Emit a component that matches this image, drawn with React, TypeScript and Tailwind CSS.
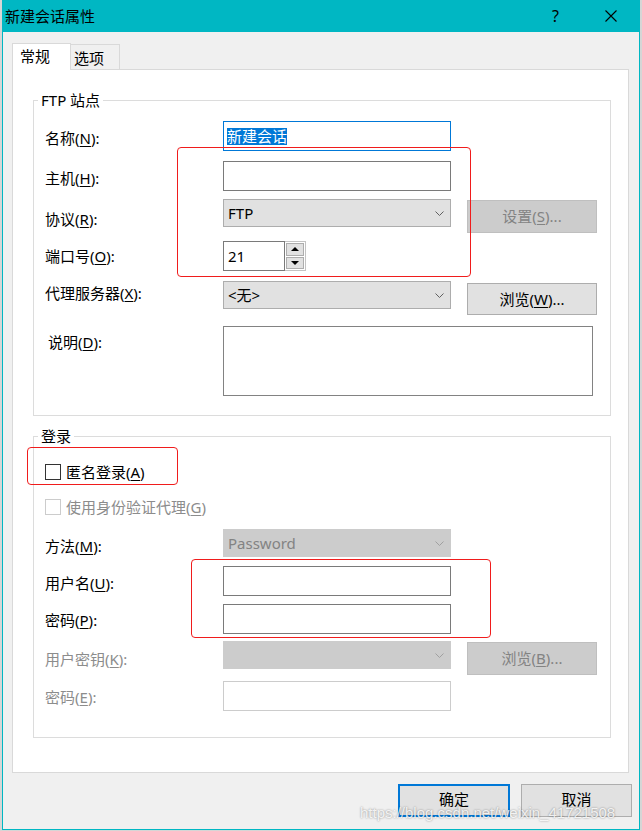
import type { ReactNode } from 'react';

const dimText = 'text-[#8c8c8c]';

function Key({ k }: { k: string }) {
  return <span className="underline underline-offset-2">{k}</span>;
}

function Label({ text, k, tail = ':', dim = false, pt }: { text: string; k: string; tail?: string; dim?: boolean; pt: string }) {
  return (
    <div className={`w-[178px] shrink-0 leading-[20px] ${pt} ${dim ? dimText : 'text-black'}`}>
      {text}(<Key k={k} />){tail}
    </div>
  );
}

function Chevron({ dim = false }: { dim?: boolean }) {
  return (
    <svg width="9" height="5" viewBox="0 0 9 5" className="shrink-0">
      <polyline points="0.5,0.5 4.5,4.5 8.5,0.5" fill="none" stroke={dim ? '#a0a0a0' : '#606060'} strokeWidth="1" />
    </svg>
  );
}

function Select({ value, dim = false }: { value?: string; dim?: boolean }) {
  return (
    <div
      className={`w-[228px] h-[28px] shrink-0 flex items-center justify-between pl-[4px] pr-[6px] border ${
        dim ? 'bg-[#cccccc] border-[#cccccc] text-[#838383]' : 'bg-[#e1e1e1] border-[#adadad] text-black'
      }`}
    >
      <span className="leading-[20px]">{value}</span>
      <Chevron dim={dim} />
    </div>
  );
}

function Btn({ children, dim = false, cls }: { children: ReactNode; dim?: boolean; cls: string }) {
  return (
    <div
      className={`ml-[16px] w-[130px] shrink-0 flex items-center justify-center border ${cls} ${
        dim ? 'bg-[#cccccc] border-[#bfbfbf] text-[#838383]' : 'bg-[#e1e1e1] border-[#adadad] text-black'
      }`}
    >
      {children}
    </div>
  );
}

function TextBox({ dim = false }: { dim?: boolean }) {
  return <div className={`w-[228px] h-[30px] shrink-0 bg-white border ${dim ? 'border-[#cccccc]' : 'border-[#7a7a7a]'}`} />;
}

function Spin() {
  return (
    <div className="flex h-[30px] shrink-0">
      <div className="w-[62px] h-full border border-[#7a7a7a] bg-white flex items-center pl-[4px] leading-[20px]">21</div>
      <div className="w-[21px] h-full border border-l-0 border-[#c3c3c3] bg-white p-px flex flex-col gap-px">
        <div className="flex-1 bg-[#e1e1e1] border border-[#adadad] flex items-center justify-center">
          <svg width="8" height="4" viewBox="0 0 8 4"><polygon points="4,0 8,4 0,4" fill="#000" /></svg>
        </div>
        <div className="flex-1 bg-[#e1e1e1] border border-[#adadad] flex items-center justify-center">
          <svg width="8" height="4" viewBox="0 0 8 4"><polygon points="0,0 8,0 4,4" fill="#000" /></svg>
        </div>
      </div>
    </div>
  );
}

function Legend({ children }: { children: ReactNode }) {
  return <legend className="ml-[4px] px-[3px] leading-[20px] text-black">{children}</legend>;
}

export default function App() {
  return (
    <div className="relative w-[642px] h-[831px] overflow-hidden bg-[#d6d6d6] text-[15px] font-[family-name:'Noto_Sans','Noto_Sans_CJK_SC',sans-serif]">
      <div className="ml-[2px] w-[638px] h-[830px] flex flex-col bg-[#f0f0f0] border-l border-r border-b border-[#00b7c3]">
        {/* title bar */}
        <div className="h-[32px] shrink-0 bg-[#00b7c3] flex items-center pl-[2px] pr-[22px] text-black">
          <span className="leading-[20px]">新建会话属性</span>
          <span className="ml-auto text-[16px] leading-[20px]">?</span>
          <svg width="12" height="12" viewBox="0 0 12 12" className="ml-[46px]">
            <path d="M0.5 0.5 L11.5 11.5 M11.5 0.5 L0.5 11.5" stroke="#000" strokeWidth="1.1" />
          </svg>
        </div>

        {/* tabs */}
        <div className="mt-[11px] ml-[9px] flex items-end h-[27px]">
          <div className="relative z-10 w-[59px] h-[27px] bg-white border-l border-t border-r border-[#d9d9d9] pl-[7px] pt-[2px] leading-[20px]">常规</div>
          <div className="w-[49px] h-[26px] border-t border-r border-[#d9d9d9] pl-[3px] pt-[3px] leading-[20px]">选项</div>
        </div>

        {/* panel */}
        <div className="-mt-px ml-[9px] w-[617px] h-[704px] bg-white border border-[#d9d9d9] pt-[20px] pl-[20px]">
          <fieldset className="w-[578px] border border-[#dcdcdc]">
            <Legend>FTP 站点</Legend>
            <div className="pl-[11px] pt-[11px] pb-[19px]">
              <div className="flex items-start">
                <Label text="名称" k="N" pt="pt-[7px]" />
                <div className="w-[228px] h-[30px] border border-[#0078d7] bg-white flex items-center pl-[3px]">
                  <span className="bg-[#0078d7] text-white leading-[17px]">新建会话</span>
                </div>
              </div>
              <div className="mt-[10px] flex items-start">
                <Label text="主机" k="H" pt="pt-[7px]" />
                <TextBox />
              </div>
              <div className="mt-[8px] flex items-start">
                <Label text="协议" k="R" pt="pt-[10px]" />
                <Select value="FTP" />
                <Btn dim cls="mt-[1px] h-[33px]">
                  设置(<Key k="S" />)...
                </Btn>
              </div>
              <div className="mt-[8px] flex items-start">
                <Label text="端口号" k="O" pt="pt-[5px]" />
                <Spin />
              </div>
              <div className="mt-[10px] flex items-start">
                <Label text="代理服务器" k="X" pt="pt-[2px]" />
                <Select value="<无>" />
                <Btn cls="mt-[2px] h-[32px]">
                  浏览(<Key k="W" />)...
                </Btn>
              </div>
              <div className="mt-[11px] flex items-start">
                <div className="w-[178px] shrink-0 pl-[3px] pt-[6px] leading-[20px]">
                  说明(<Key k="D" />):
                </div>
                <div className="w-[370px] h-[70px] border border-[#828282] bg-white" />
              </div>
            </div>
          </fieldset>

          <fieldset className="mt-[10px] w-[578px] border border-[#dcdcdc]">
            <Legend>登录</Legend>
            <div className="pl-[11px] pt-[16px] pb-[26px]">
              <div className="h-[20px] flex items-center">
                <div className="w-[16px] h-[16px] border border-[#333333] bg-white" />
                <span className="ml-[5px] leading-[20px]">
                  匿名登录(<Key k="A" />)
                </span>
              </div>
              <div className="mt-[15px] h-[20px] flex items-center">
                <div className="w-[16px] h-[16px] border border-[#cccccc] bg-white" />
                <span className={`ml-[5px] leading-[20px] ${dimText}`}>
                  使用身份验证代理(<Key k="G" />)
                </span>
              </div>
              <div className="mt-[12px] flex items-start">
                <Label text="方法" k="M" pt="pt-[7px]" />
                <Select value="Password" dim />
              </div>
              <div className="mt-[9px] flex items-start">
                <Label text="用户名" k="U" pt="pt-[7px]" />
                <TextBox />
              </div>
              <div className="mt-[8px] flex items-start">
                <Label text="密码" k="P" pt="pt-[6px]" />
                <TextBox />
              </div>
              <div className="mt-[7px] flex items-start">
                <Label text="用户密钥" k="K" pt="pt-[8px]" dim />
                <Select dim />
                <Btn dim cls="mt-[1px] h-[33px]">
                  浏览(<Key k="B" />)...
                </Btn>
              </div>
              <div className="mt-[6px] flex items-start">
                <Label text="密码" k="E" pt="pt-[6px]" dim />
                <TextBox dim />
              </div>
            </div>
          </fieldset>
        </div>

        {/* footer */}
        <div className="mt-[11px] flex justify-end gap-[11px] pr-[7px]">
          <div className="w-[112px] h-[33px] flex items-center justify-center bg-[#e1e1e1] border-2 border-[#0078d7] pb-[2px]">确定</div>
          <div className="w-[111px] h-[33px] flex items-center justify-center bg-[#e1e1e1] border border-[#adadad] pb-[2px]">取消</div>
        </div>
      </div>

      {/* red annotation marks */}
      <div className="absolute left-[177px] top-[147px] w-[294px] h-[130px] border border-[#f01c1c] rounded-[4px]" />
      <div className="absolute left-[27px] top-[447px] w-[151px] h-[38px] border border-[#f01c1c] rounded-[4px]" />
      <div className="absolute left-[191px] top-[559px] w-[300px] h-[79px] border border-[#f01c1c] rounded-[4px]" />

      {/* watermark */}
      <div className="absolute left-[360px] top-[804px] text-[15px] leading-[18px] font-[family-name:'Liberation_Sans',sans-serif] text-[rgba(255,255,255,0.85)] [text-shadow:0_0_2px_rgba(0,0,0,0.45)]">
        https://blog.csdn.net/weixin_41721508
      </div>
    </div>
  );
}
